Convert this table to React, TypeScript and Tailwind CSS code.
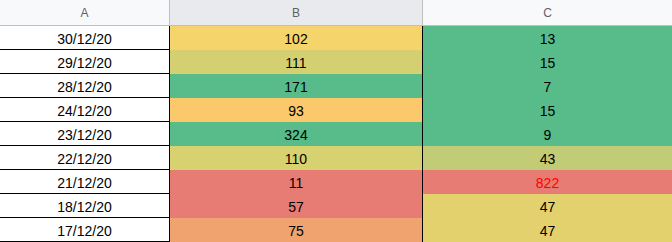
import React from "react";

type Cell = { v: string; bg: string; red?: boolean };
const rows: { a: string; b: Cell; c: Cell }[] = [
  { a: "30/12/20", b: { v: "102", bg: "#f5d56b" }, c: { v: "13", bg: "#57bb8a" } },
  { a: "29/12/20", b: { v: "111", bg: "#d4d071" }, c: { v: "15", bg: "#57bb8a" } },
  { a: "28/12/20", b: { v: "171", bg: "#57bb8a" }, c: { v: "7", bg: "#57bb8a" } },
  { a: "24/12/20", b: { v: "93", bg: "#fbc96b" }, c: { v: "15", bg: "#57bb8a" } },
  { a: "23/12/20", b: { v: "324", bg: "#57bb8a" }, c: { v: "9", bg: "#57bb8a" } },
  { a: "22/12/20", b: { v: "110", bg: "#d7d16f" }, c: { v: "43", bg: "#c2cb76" } },
  { a: "21/12/20", b: { v: "11", bg: "#e67c73" }, c: { v: "822", bg: "#e67c73", red: true } },
  { a: "18/12/20", b: { v: "57", bg: "#e67c73" }, c: { v: "47", bg: "#e3d16e" } },
  { a: "17/12/20", b: { v: "75", bg: "#f0a36e" }, c: { v: "47", bg: "#e3d16e" } },
];

export default function App() {
  return (
    <div
      className="w-[672px] h-[242px] overflow-hidden bg-white"
      style={{ fontFamily: '"Liberation Sans", Arial, sans-serif' }}
    >
      <div className="grid grid-cols-[169px_1px_252px_1px_249px] h-[26px] border-b border-[#c0c0c0] text-[12px] text-[#5f6368]">
        <div className="bg-[#f8f9fa] flex items-center justify-center">A</div>
        <div className="bg-[#c0c0c0]" />
        <div className="bg-[#e8eaed] flex items-center justify-center">B</div>
        <div className="bg-[#c0c0c0]" />
        <div className="bg-[#f8f9fa] flex items-center justify-center">C</div>
      </div>
      {rows.map((r, i) => (
        <div
          key={i}
          className="grid grid-cols-[169px_1px_252px_1px_249px] h-[24px] border-b border-black text-[14px] text-black"
        >
          <div className="flex items-center justify-center pt-[3px]">{r.a}</div>
          <div className="bg-black" />
          <div className="flex items-center justify-center pt-[3px]" style={{ backgroundColor: r.b.bg }}>
            {r.b.v}
          </div>
          <div className="bg-black" />
          <div
            className={`flex items-center justify-center pt-[3px] ${r.c.red ? "text-[#ff0000]" : "text-black"}`}
            style={{ backgroundColor: r.c.bg }}
          >
            {r.c.v}
          </div>
        </div>
      ))}
    </div>
  );
}
